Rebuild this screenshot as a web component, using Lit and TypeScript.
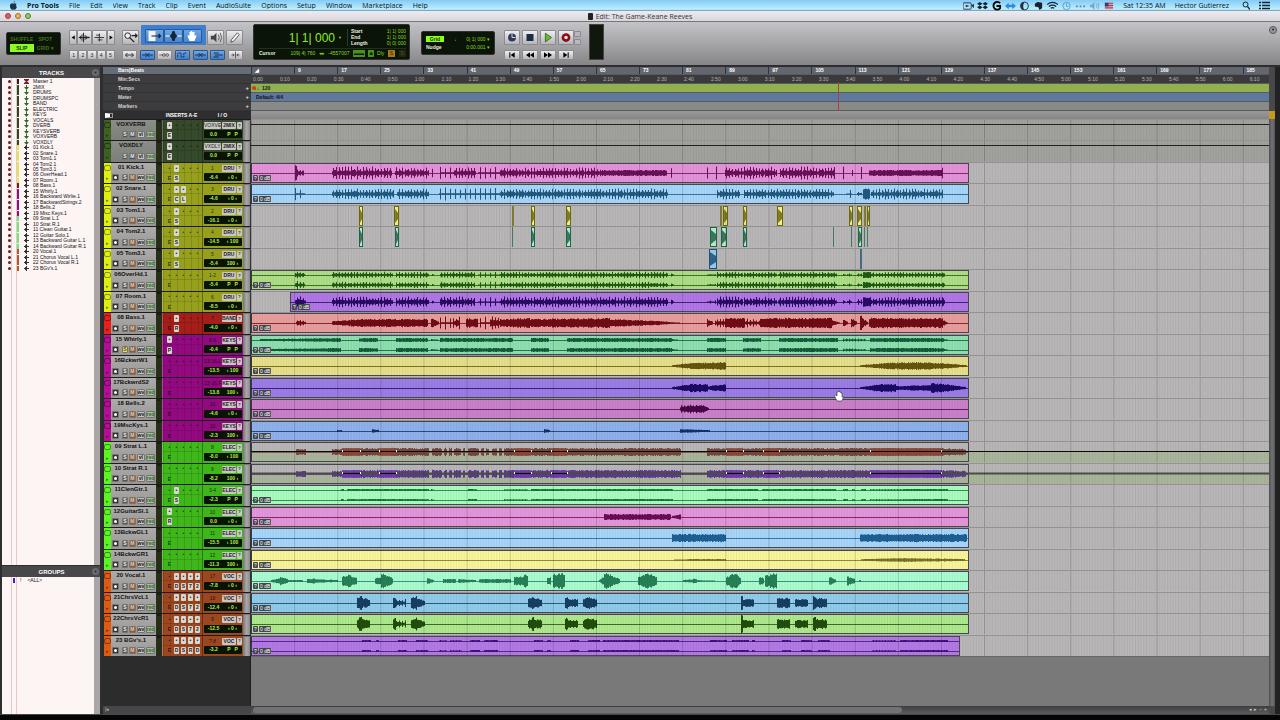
import { LitElement, html, svg, css, nothing } from "lit";
import { customElement } from "lit/decorators.js";
import { classMap } from "lit/directives/class-map.js";

/* Timeline scale: one bar at 120 bpm lasts two seconds. */
const BAR = 5.39;
const SECOND = BAR / 2;
/* Segment positions are counted from the left edge of the window. */
const ORIGIN = 251;

type Kind = 0 | 1 | 2; // solid, dense hits, sparse hits
type Seg = [number, number, number, number, Kind];

interface Track {
  name: string;
  tint: string;
  strip: string;
  input: string;
  out: string;
  vol: string;
  pan: string;
  slots?: string;
  aux?: boolean;
  solo?: boolean;
  volumeView?: boolean;
  from?: number;
  to?: number;
  fill?: string;
  wave?: string;
  stereo?: boolean;
  segs?: Seg[];
  bits?: [number, number][];
  bright?: string;
}

const OLIVE = "#96a01c", LIME = "#dff00a", RED = "#a51f1a", MAG = "#930a80", GRN = "#3fb61a", ORG = "#9c4720", DARK = "#35492b";

const hits = (a: number): Seg[] => [
  [332, 393, a, a, 1], [396, 429, a, a, 1], [432, 434, a / 3, 0, 0], [440, 475, a, a, 1],
  [478, 500, a, a, 2], [500, 668, a, a, 1], [671, 674, a / 2, 0, 0], [707, 716, a / 3, a / 3, 2],
  [717, 743, a, a, 1], [744, 777, a, a, 1], [778, 837, a, a, 1], [843, 846, a / 3, 0, 0],
  [847, 852, a / 2, a / 2, 1], [857, 862, a / 2, a / 2, 1], [863, 871, a, a, 0], [871, 942, a * 0.9, a * 0.9, 1], [942, 945, a, 1, 0],
];
const strat: Seg[] = [
  [296, 306, 3, 3, 0], [332, 342, 3, 3, 0], [342, 360, 4, 4, 0], [360, 379, 4, 4, 0], [379, 396, 4, 4, 0],
  [396, 429, 4, 4, 0], [432, 442, 4, 4, 0], [444, 447, 4, 4, 0], [449, 452, 4, 4, 0], [454, 461, 4, 4, 0],
  [463, 465, 4, 4, 0], [468, 479, 4, 4, 0], [481, 484, 4, 4, 0], [486, 489, 4, 4, 0], [492, 497, 4, 4, 0], [499, 502, 4, 4, 0],
  [504, 514, 4, 4, 0], [514, 531, 4, 4, 0], [531, 551, 4, 4, 0], [551, 567, 4, 4, 0], [567, 681, 4, 4, 0],
  [707, 726, 4, 4, 0], [726, 743, 4, 4, 0], [743, 763, 4, 4, 0], [763, 779, 4, 4, 0], [779, 870, 4, 4, 0],
  [870, 941, 4, 4, 0], [941, 966, 4, 3, 0],
];
const chorus: Seg[] = [
  [357, 362, 5, 9, 0], [362, 370, 5, 4, 0], [393, 396, 6, 6, 0], [396, 406, 4, 4, 1], [411, 417, 5, 7, 0], [417, 425, 5, 2, 0],
  [528, 534, 4, 8, 0], [534, 542, 5, 4, 0], [565, 568, 6, 6, 0], [568, 578, 4, 4, 0], [583, 590, 4, 7, 0], [590, 597, 6, 4, 0],
  [741, 743, 9, 8, 0], [743, 754, 4, 4, 0], [777, 790, 5, 5, 0], [795, 808, 4, 4, 0], [813, 816, 7, 7, 0], [816, 827, 5, 5, 0],
];

const T: Track[] = [
  { name: "VOXVERB", tint: DARK, strip: "#3d6120", input: "VOXVE", out: "2MIX", vol: "0.0", pan: "P P", slots: "E", aux: true },
  { name: "VOXDLY", tint: DARK, strip: "#3d6120", input: "VXDLY", out: "2MIX", vol: "0.0", pan: "P P", slots: "E", aux: true },
  { name: "01 Kick.1", tint: OLIVE, strip: LIME, input: "1", out: "DRU", vol: "-6.4", pan: "› 0 ‹", slots: "-S", fill: "#e694dc", wave: "#6b1058",
    segs: [[295, 297, 8, 8, 0], [297, 304, 4, 4, 1], [332, 392, 6, 6, 1], [395, 429, 6, 5, 1], [432, 433, 5, 5, 0], [440, 454, 6, 7, 2], [454, 476, 5, 5, 1], [478, 500, 6, 6, 2], [500, 602, 5, 5, 1], [602, 667, 3, 3, 0], [671, 672, 6, 6, 0], [707, 708, 6, 6, 0], [716, 717, 7, 7, 0], [725, 743, 6, 6, 1], [743, 777, 6, 6, 1], [780, 835, 6, 6, 1], [843, 844, 6, 6, 0], [852, 853, 4, 4, 0], [861, 862, 7, 7, 0], [869, 942, 3, 3, 0], [942, 943, 6, 6, 0]] },
  { name: "02 Snare.1", tint: OLIVE, strip: LIME, input: "3", out: "DRU", vol: "-4.6", pan: "› 0 ‹", slots: "-CL", fill: "#a8d8fd", wave: "#215a80",
    segs: [[295, 305, 6, 6, 2], [332, 394, 5, 5, 1], [397, 429, 5, 5, 1], [439, 470, 6, 6, 2], [470, 500, 6, 6, 2], [500, 668, 5, 5, 1], [717, 740, 5, 5, 1], [744, 834, 5, 5, 1], [846, 852, 4, 4, 2], [857, 862, 2, 2, 1], [863, 870, 6, 6, 0], [871, 943, 5, 5, 1]] },
  { name: "03 Tom1.1", tint: OLIVE, strip: LIME, input: "2", out: "DRU", vol: "-16.1", pan: "› 0 ‹", slots: "-S", fill: "#f8f488", wave: "#6f6a10",
    bits: [[359, 4], [394, 5], [512, 2], [531, 4], [566, 5], [720, 2], [723, 5], [743, 4], [777, 6], [849, 4], [857, 5], [864, 2], [867, 3]] },
  { name: "04 Tom2.1", tint: OLIVE, strip: LIME, input: "4", out: "DRU", vol: "-14.5", pan: "‹ 100", slots: "-S", fill: "#b8f0cc", wave: "#22664a",
    bits: [[359, 4], [395, 4], [512, 1], [531, 4], [566, 5], [710, 7], [721, 6], [743, 4], [833, 1], [851, 1], [858, 4], [864, 1], [867, 1]] },
  { name: "05 Tom3.1", tint: OLIVE, strip: LIME, input: "5", out: "DRU", vol: "-5.4", pan: "100 ›", slots: "-S", fill: "#9ccdf0", wave: "#1d5478", bits: [[709, 8], [860, 2]] },
  { name: "06OverHd.1", tint: OLIVE, strip: LIME, input: "1-2", out: "DRU", vol: "-5.4", pan: "P P", fill: "#b0e088", wave: "#1f5a14", stereo: true, segs: [[295, 305, 4, 3, 1], ...hits(3)] },
  { name: "07 Room.1", tint: OLIVE, strip: LIME, input: "6", out: "DRU", vol: "-8.5", pan: "› 0 ‹", from: 290, fill: "#b278e8", wave: "#2a0a63", segs: [[295, 306, 6, 5, 1], ...hits(5)] },
  { name: "08 Bass.1", tint: RED, strip: "#e8201c", input: "7", out: "BAND", vol: "-4.0", pan: "› 0 ‹", slots: "-R", fill: "#eb9f9f", wave: "#720c14",
    segs: [[296, 306, 4, 2, 1], [332, 360, 2, 4, 0], [360, 428, 4, 4, 0], [431, 439, 5, 1, 0], [440, 453, 6, 6, 2], [453, 460, 6, 6, 1], [466, 478, 5, 4, 0], [480, 490, 6, 6, 2], [490, 500, 7, 5, 1], [500, 530, 4, 5, 0], [530, 610, 4, 5, 0], [610, 660, 4, 2, 0], [660, 680, 2, 0, 0], [707, 713, 4, 1, 0], [715, 725, 6, 3, 1], [725, 745, 5, 5, 0], [745, 760, 4, 3, 1], [760, 832, 5, 5, 0], [832, 840, 3, 0, 0], [843, 848, 4, 1, 0], [851, 857, 5, 1, 0], [860, 863, 9, 5, 0], [863, 868, 4, 1, 0], [869, 943, 5, 5, 0], [943, 948, 3, 0, 0]] },
  { name: "15 Whirly.1", tint: MAG, strip: "#b80c98", input: "5-6", out: "KEYS", vol: "-0.4", pan: "P P", slots: "P", solo: true, fill: "#8fe2b2", wave: "#145c3a", stereo: true,
    segs: [[260, 341, 1, 2, 0], [359, 378, 2, 2, 0], [396, 428, 2, 2, 0], [431, 438, 1, 0, 0], [440, 513, 2, 2, 0], [531, 549, 2, 2, 0], [567, 672, 2, 2, 0], [672, 678, 1, 0, 0], [707, 726, 2, 2, 0], [743, 761, 2, 2, 0], [779, 838, 2, 2, 0], [843, 866, 2, 1, 1], [870, 944, 2, 2, 0], [944, 948, 1, 0, 0]] },
  { name: "16BckwrW1", tint: MAG, strip: "#b80c98", input: "13-16.L", out: "KEYS", vol: "-13.5", pan: "‹ 100", fill: "#e9e28c", wave: "#665510",
    segs: [[672, 690, 1, 3, 0], [690, 726, 3, 4, 0], [860, 885, 1, 3, 0], [885, 912, 3, 4, 0], [912, 940, 4, 3, 0], [940, 967, 3, 1, 0]] },
  { name: "17BckwrdS2", tint: MAG, strip: "#b80c98", input: "13-16.R", out: "KEYS", vol: "-13.8", pan: "100 ›", fill: "#9e7ee8", wave: "#1c0a66",
    segs: [[672, 690, 1, 4, 0], [690, 708, 4, 4, 0], [708, 726, 2, 4, 0], [860, 880, 1, 4, 0], [880, 896, 4, 4, 0], [896, 931, 2, 3, 0], [931, 945, 5, 4, 0], [945, 966, 4, 1, 0]] },
  { name: "18 Bells.2", tint: MAG, strip: "#b80c98", input: "10", out: "KEYS", vol: "-4.6", pan: "› 0 ‹", fill: "#cc82cc", wave: "#4a0745", segs: [[680, 703, 4, 4, 1], [681, 703, 3, 4, 0], [703, 709, 4, 1, 0]] },
  { name: "19MscKys.1", tint: MAG, strip: "#b80c98", input: "10", out: "KEYS", vol: "-2.3", pan: "100 ›", fill: "#90b3ee", wave: "#14306b", segs: [[337, 342, 1, 1, 0], [372, 379, 2, 1, 0], [544, 550, 2, 1, 0], [680, 710, 2, 1, 0]] },
  { name: "09 Strat L.1", tint: GRN, strip: "#5bf520", input: "8", out: "ELEC", vol: "-8.0", pan: "‹ 100", volumeView: true, fill: "#b4b0ac", wave: "#76483e", bright: "#96483c", segs: strat },
  { name: "10 Strat R.1", tint: GRN, strip: "#5bf520", input: "9", out: "ELEC", vol: "-8.2", pan: "100 ›", volumeView: true, fill: "#b4b0ac", wave: "#5f3a94", bright: "#7a38c4", segs: strat },
  { name: "11ClenGtr.1", tint: GRN, strip: "#5bf520", input: "3-4", out: "ELEC", vol: "-2.3", pan: "P P", slots: "-S", fill: "#abffc0", wave: "#1a7440", stereo: true,
    segs: [[341, 344, 1, 1, 0], [347, 429, 1, 1, 0], [431, 434, 1, 0, 0], [468, 477, 1, 1, 0], [504, 528, 1, 1, 1], [531, 673, 1, 1, 0], [707, 758, 1, 1, 0], [762, 836, 1, 1, 0], [843, 848, 1, 1, 0], [852, 855, 1, 1, 0], [861, 866, 1, 1, 0], [870, 904, 1, 1, 1], [904, 948, 1, 1, 0]] },
  { name: "12GuitarSl.1", tint: GRN, strip: "#5bf520", input: "10", out: "ELEC", vol: "0.0", pan: "› 0 ‹", slots: "R", fill: "#e797dd", wave: "#6b0d55", segs: [[604, 610, 3, 3, 0], [610, 671, 3, 3, 0], [672, 681, 1, 3, 0]] },
  { name: "13BckwGL1", tint: GRN, strip: "#5bf520", input: "11", out: "ELEC", vol: "-15.5", pan: "‹ 100", fill: "#a8d8fd", wave: "#1e6096", segs: [[672, 726, 4, 4, 0], [860, 967, 4, 4, 0]] },
  { name: "14BckwGR1", tint: GRN, strip: "#5bf520", input: "12", out: "ELEC", vol: "-11.3", pan: "100 ›", fill: "#fbf89c", wave: "#77742a", segs: [[674, 690, 0, 1, 0], [690, 726, 1, 1, 0], [861, 905, 1, 2, 0], [905, 965, 2, 1, 0]] },
  { name: "20 Vocal.1", tint: ORG, strip: "#e05a10", input: "17", out: "VOC", vol: "-7.8", pan: "› 0 ‹", slots: "-DS72", fill: "#abffd3", wave: "#268258",
    segs: [[271, 280, 1, 3, 0], [280, 288, 4, 2, 0], [288, 303, 1, 1, 0], [307, 315, 2, 3, 0], [315, 338, 2, 1, 0], [342, 348, 5, 7, 0], [348, 357, 7, 3, 0], [375, 381, 3, 4, 0], [381, 385, 8, 8, 0], [385, 393, 6, 3, 0], [427, 434, 3, 1, 0], [443, 456, 2, 2, 0], [458, 476, 2, 1, 0], [479, 511, 2, 2, 0], [514, 524, 4, 5, 0], [524, 528, 8, 4, 0], [547, 551, 3, 4, 0], [553, 565, 7, 8, 0], [599, 604, 1, 5, 0], [604, 612, 9, 6, 0], [612, 620, 5, 2, 0], [638, 648, 4, 9, 0], [648, 657, 8, 4, 0], [683, 693, 1, 2, 0], [693, 697, 3, 2, 0], [697, 715, 1, 0, 0], [726, 735, 4, 9, 0], [735, 741, 8, 3, 0], [759, 764, 4, 3, 0], [765, 770, 7, 5, 0], [770, 777, 8, 8, 0], [829, 836, 5, 1, 0], [847, 855, 5, 2, 0], [859, 861, 1, 1, 0]] },
  { name: "21ChrsVcL1", tint: ORG, strip: "#e05a10", input: "18", out: "VOC", vol: "-12.4", pan: "› 0 ‹", slots: "-DS72", fill: "#91ceed", wave: "#163f60", segs: chorus },
  { name: "22ChrsVcR1", tint: ORG, strip: "#e05a10", input: "9", out: "VOC", vol: "-12.5", pan: "› 0 ‹", slots: "-DS72", fill: "#afeb8f", wave: "#234d0c", segs: chorus },
  { name: "23 BGv's.1", tint: ORG, strip: "#e05a10", input: "7-8", out: "VOC", vol: "-3.2", pan: "P P", slots: "-DSRD", to: 959, fill: "#b47be6", wave: "#42107e", stereo: true,
    segs: [[362, 371, 1, 1, 0], [376, 379, 1, 1, 0], [398, 407, 1, 1, 0], [416, 428, 1, 1, 0], [439, 447, 1, 1, 2], [450, 462, 1, 1, 1], [470, 480, 1, 1, 0], [484, 498, 1, 1, 0], [534, 543, 1, 1, 0], [547, 551, 1, 1, 0], [570, 579, 1, 1, 0], [588, 600, 1, 1, 0], [603, 679, 1, 1, 0], [710, 727, 1, 1, 0], [732, 749, 1, 1, 0], [752, 755, 1, 1, 0], [782, 791, 1, 1, 0], [801, 812, 1, 1, 0], [818, 830, 1, 1, 0], [872, 896, 1, 1, 1], [900, 948, 1, 1, 0]] },
];

const LIST: [string, string][] = [
  ["Master 1", "#222"], ["2MIX", "#2c4a20"], ["DRUMS", "#2c4a20"], ["DRUMSPC", "#2c4a20"], ["BAND", "#2c4a20"], ["ELECTRIC", "#2c4a20"],
  ["KEYS", "#2c4a20"], ["VOCALS", "#2c4a20"], ["DVERB", "#2c4a20"], ["KEYSVERB", "#2c4a20"], ["VOXVERB", "#2c4a20"], ["VOXDLY", "#2c4a20"],
  ["01 Kick.1", "#e6e44c"], ["02 Snare.1", "#e6e44c"], ["03 Tom1.1", "#e6e44c"], ["04 Tom2.1", "#e6e44c"], ["05 Tom3.1", "#e6e44c"],
  ["06 OverHead.1", "#e6e44c"], ["07 Room.1", "#e6e44c"], ["08 Bass.1", "#6e1c24"], ["15 Whirly.1", "#8a1080"], ["16 Backward Wirlie.1", "#8a1080"],
  ["17 BackwardStrings.2", "#8a1080"], ["18 Bells.2", "#8a1080"], ["19 Misc Keys.1", "#8a1080"], ["09 Strat L.1", "#6ee87a"], ["10 Strat R.1", "#6ee87a"],
  ["11 Clean Guitar.1", "#6ee87a"], ["12 Guitar Solo.1", "#6ee87a"], ["13 Backward Guitar L.1", "#6ee87a"], ["14 Backward Guitar R.1", "#6ee87a"],
  ["20 Vocal.1", "#b8562c"], ["21 Chorus Vocal L.1", "#b8562c"], ["22 Chorus Vocal R.1", "#b8562c"], ["23 BGv's.1", "#b8562c"],
];

function wavePath(segs: Seg[], mid: number, seed: number): string {
  let s = seed * 7919 + 13, d = "";
  const rnd = () => ((s = (s * 16807) % 2147483647) / 2147483647);
  for (const [x0, x1, a0, a1, kind] of segs) {
    const n = Math.max(1, x1 - x0);
    for (let i = 0; i < n; i++) {
      const a = a0 + ((a1 - a0) * i) / n, r = rnd();
      const h = kind === 0 ? a * (0.72 + 0.32 * r)
        : kind === 1 ? a * ((x0 + i) % 3 === 0 ? 0.65 + 0.45 * r : 0.25 + 0.3 * r)
        : a * ((x0 + i) % 5 === 0 ? 0.7 + 0.4 * r : 0.12);
      const hh = Math.max(0.6, h);
      d += `M${x0 + i - ORIGIN} ${(mid - hh).toFixed(1)}h1v${(hh * 2).toFixed(1)}h-1z`;
    }
  }
  return d;
}

const BRIGHT = [[342, 360], [379, 396], [514, 531], [551, 567], [726, 743], [763, 779], [870, 941]];

/* Glyphs of the edit tools, drawn in a 16 by 12 box. */
const glyph: Record<string, unknown> = {
  left: svg`<path d="M12 1v10L4 6z"/>`,
  right: svg`<path d="M4 1v10l8-5z"/>`,
  wave: svg`<path d="M1 6h14M3 4v4M5 2v8M7 0v12M9 3v6M11 4v4M13 5v2" stroke="#222" stroke-width="1.2"/>`,
  midi: svg`<path d="M2 6h12M4 3h5M6 9h6M8 1v10" stroke="#333" stroke-width="1.2" fill="none"/>`,
  zoom: svg`<circle cx="5" cy="4" r="3" fill="#eee" stroke="#222"/><path d="M7 6l5 5M9 4h6M13 2l2 2-2 2" stroke="#222" stroke-width="1.3" fill="none"/>`,
  trim: svg`<path d="M2 1h7v10H2z" fill="#f4f4f4"/><path d="M5 6h9M12 4l2 2-2 2" stroke="#123" stroke-width="1.2" fill="none"/>`,
  select: svg`<path d="M0 6h16" stroke="#fff"/><path d="M4 6l2-2 1-3h2l1 3 2 2-2 2-1 3H7L6 8z" fill="#132638"/>`,
  hand: svg`<path d="M5 11L3 6l1-1 1 1V2h1.300v3V1h1.400v4V2H10v4l1-1 1 1-2 5z" fill="#fff"/>`,
  scrub: svg`<path d="M3 4h3l3-3v10L6 8H3z" fill="#444"/><path d="M11 3q2 3 0 6M13 1q3 5 0 10" stroke="#555" fill="none"/>`,
  pencil: svg`<path d="M4 11l1-3 6-7 2 2-6 7z" fill="#f6f6f6" stroke="#333" stroke-width=".8"/>`,
  arrows: svg`<path d="M2 6h12M5 3L2 6l3 3M11 3l3 3-3 3" stroke="#222" stroke-width="1.3" fill="none"/>`,
  tab: svg`<path d="M0 6h7M9 6h7M5 3l3 3-3 3M11 3L8 6l3 3" stroke="#0c2038" stroke-width="1.300" fill="none"/>`,
  link: svg`<path d="M0 6h6" stroke="#444"/><circle cx="7" cy="6" r="2" fill="none" stroke="#333"/><circle cx="12" cy="6" r="2" fill="none" stroke="#333"/>`,
  keys: svg`<path d="M1 9V3h5v6h4V3h5" stroke="#0c2038" stroke-width="1.300" stroke-dasharray="3 1" fill="none"/>`,
  mirror: svg`<path d="M2 3h8M4 6h12M2 9h8" stroke="#0c2038" stroke-width="1.300"/>`,
  insert: svg`<path d="M8 1v10M2 6h4M10 6h4M4 4l2 2-2 2M12 4l-2 2 2 2" stroke="#222" fill="none"/>`,
  online: svg`<circle cx="8" cy="6" r="4.500" fill="#2d3a55"/><path d="M8 2v4h4" stroke="#eee" fill="none"/>`,
  stop: svg`<path d="M4 2h8v8H4z" fill="#1c2c48"/>`,
  play: svg`<path d="M5 1v10l7-5z" fill="#5fc026" stroke="#234a12" stroke-width=".8"/>`,
  record: svg`<circle cx="8" cy="6" r="5" fill="#8c0c14"/><circle cx="8" cy="6" r="2" fill="#f6eaea"/>`,
  rtz: svg`<path d="M4 2h1.500v8H4zM12 2v8L6 6z"/>`,
  rew: svg`<path d="M8 2v8L2 6zM14 2v8L8 6z"/>`,
  ffw: svg`<path d="M2 2v8l6-4zM8 2v8l6-4z"/>`,
  end: svg`<path d="M4 2v8l6-4zM10.500 2H12v8h-1.500z"/>`,
};
const icon = (n: string) => html`<svg class="glyph" viewBox="0 0 16 12" aria-hidden="true">${glyph[n]}</svg>`;

const STATUS = [
  svg`<rect x="0" y="2" width="9" height="7" rx="1" fill="none" stroke="#234"/><path d="M3 4l4 1.500L3 7zM9 5l3-2v5z" fill="#234"/>`,
  svg`<path d="M3 1l3 2-3 2-3-2zM9 1l3 2-3 2-3-2zM3 5l3 2-3 2-3-2zM9 5l3 2-3 2-3-2z" fill="#123"/>`,
  svg`<path d="M10 2.500A4.200 4.200 0 1 0 10 8V5.500H6" stroke="#000" stroke-width="2" fill="none"/>`,
  svg`<path d="M0 5.500L4 2v7zM12 5.500L8 2v7zM4 4h4v3H4z" fill="#2a8be0"/>`,
  svg`<circle cx="6" cy="5.500" r="4.300" fill="none" stroke="#234"/><path d="M6 1a4.500 4.500 0 0 0 0 9q-3-4 0-9z" fill="#234"/>`,
  svg`<path d="M2 3l3-2 5 1v6l-3 2-1-3-4-1z" fill="#15242c"/>`,
  svg`<path d="M0 4q6-5 12 0M2 6q4-3 8 0M4 8q2-1.500 4 0" stroke="#123" stroke-width="1.300" fill="none"/>`,
  svg`<circle cx="6" cy="5.500" r="4" fill="none" stroke="#5c9cc8"/><path d="M6 3v3h2" stroke="#5c9cc8" fill="none"/>`,
  svg`<path d="M1 5h2v2H1zM5 5h2v2H5zM9 5h2v2H9z" fill="#5d87a8"/>`,
  svg`<path d="M1 4h2l3-3v9L3 7H1z" fill="#79a8c6"/><path d="M8 3q2 2.500 0 5M10 2q2 3.500 0 7" stroke="#79a8c6" fill="none"/>`,
  svg`<path d="M2 2h9v7H2z" fill="#d8a0a8"/><path d="M2 2.500h9M2 5h9M2 7.500h9" stroke="#b0304a"/><path d="M2 2h4v4H2z" fill="#34407c"/>`,
];

@customElement("app-root")
export class AppRoot extends LitElement {
  static styles = css`
    :host { display: block; font-family: "Liberation Sans", Arial, sans-serif; font-size: 5px; line-height: 1; color: #111; }
    * { box-sizing: border-box; }
    button { font: inherit; color: inherit; border: 0; padding: 0; margin: 0; background: none; line-height: 1; white-space: nowrap; overflow: hidden; }
    .window { display: flex; flex-direction: column; height: 100vh; min-height: 640px; background: #0a0a0c; overflow: hidden; }
    .glyph { display: block; width: 100%; height: 100%; }

    .menubar { flex: none; height: 11px; display: flex; align-items: center; padding: 0 10px 0 9px; font-family: "Open Sans", "Noto Sans", sans-serif; font-size: 7px; font-weight: 500; color: #06141f; background: linear-gradient(#84cbf6, #bdeefc 85%, #5c8ca4); }
    .menubar .apple { width: 9px; height: 9px; margin-right: 9px; }
    .menus { display: flex; gap: 10px; }
    .menus button:first-child { font-weight: 700; }
    .status { margin-left: auto; display: flex; align-items: center; gap: 9px; }
    .status-icons { display: flex; gap: 3px; }
    .status-icons svg { width: 11px; height: 10px; }
    .status .find { width: 8px; height: 9px; margin-left: 4px; }
    .status .list { width: 11px; height: 9px; margin: 0; }

    .titlebar { flex: none; height: 11px; display: grid; grid-template-columns: 1fr auto 1fr; align-items: center; font-family: "Open Sans", "Noto Sans", sans-serif; font-size: 7px; color: #333; background: linear-gradient(#eeeaf0, #d9d7dc); border-bottom: 1px solid #77767a; }
    .lights { display: flex; gap: 4px; padding-left: 5px; }
    .lights button { width: 6px; height: 6px; border-radius: 50%; border: 1px solid #8a4a4a; background: #f0565a; }
    .lights button:nth-child(2) { background: #f5b34a; border-color: #9a7030; }
    .lights button:nth-child(3) { background: #8fd05c; border-color: #4e8030; }
    .titlebar h1 { margin: 0; font: inherit; display: flex; gap: 3px; align-items: center; }
    .doc { width: 5px; height: 7px; background: #222; border-radius: 1px; }

    .toolbar { flex: none; height: 43px; display: flex; align-items: flex-end; padding: 0 3px 5px 6px; background: linear-gradient(#c4c3c8, #a9a8ab 45%, #868688); }
    .lcd { background: #0b1408; border: 1px solid #31342f; border-radius: 2px; color: #86dc1c; }
    .modes { width: 55px; height: 23px; margin-bottom: 5px; display: grid; grid-template-columns: 1fr 1fr; align-content: center; padding: 2px 3px; row-gap: 1px; color: #447114; font-size: 5px; }
    .modes button { height: 8px; font-weight: 700; }
    .modes .on { background: #8dff1e; color: #17300a; }
    .group { display: flex; flex-direction: column; gap: 5px; }
    .bar { display: flex; }
    .key { background: linear-gradient(#eeeef0, #b6b6ba); border: 1px solid #8a8a90; border-radius: 1px; height: 15px; width: 17px; color: #222; }
    .key.low { height: 10px; }
    .views { width: 46px; margin-left: 8px; }
    .views .key { flex: 2; width: auto; }
    .views .slim { flex: 1; padding: 3px 0; }
    .views .low { flex: 1; }
    .edit { width: 121px; margin-left: 7px; }
    .edit .bar:first-child { align-items: flex-end; justify-content: space-between; }
    .smart { display: flex; padding: 4px 4px 2px 4px; height: 20px; background: #3f7fd0; border-radius: 1px; }
    .smart .key { width: 19px; height: 14px; background: linear-gradient(#6fa6e4, #4a86ce); border-color: #2b5a9a; }
    .edit .low { width: 15px; }
    .edit .bar:last-child { justify-content: space-between; }
    .key.blue { background: linear-gradient(#6fa8e8, #3f7cc8); border-color: #2a5690; }

    .counter { width: 157px; height: 36px; margin-left: 10px; display: flex; flex-direction: column; padding: 2px 3px 1px 5px; }
    .counter .top { display: flex; flex: 1; align-items: center; }
    .counter output { font-size: 12px; width: 76px; text-align: right; color: #90ec22; }
    .counter .drop { margin: 0 5px 0 3px; font-size: 4px; }
    .counter dl { flex: 1; margin: 0; padding-left: 3px; border-left: 1px solid #294018; display: grid; grid-template-columns: 1fr auto; row-gap: 1px; }
    dt { color: #e8f0e0; font-weight: 700; }
    dd { margin: 0; }
    .counter dt, .counter dd { font-size: 5px; }
    .counter .foot { display: flex; justify-content: space-between; align-items: center; border-top: 1px solid #21301a; height: 10px; }
    .counter .foot b { color: #e8f0e0; width: 28px; }
    .swatch { background: #4b9018; color: #0b1408; padding: 1px; }
    .amber { background: #a8781c; color: #2c1c04; padding: 1px 2px; }
    .dim { background: #24260f; color: #4f5a20; padding: 1px 2px; }
    .gridbox { width: 74px; height: 24px; margin: 0 0 5px 11px; padding: 3px 4px; display: grid; grid-template-columns: auto 1fr; row-gap: 1px; align-items: center; }
    .gridbox .on { background: #8dff1e; color: #17300a; width: 18px; height: 6px; font-weight: 700; }
    .gridbox .lab { color: #e8f0e0; font-weight: 700; text-align: left; }
    .gridbox span { text-align: right; }
    .transport { width: 72px; margin-left: 9px; }
    .transport .bar { gap: 2px; }
    .transport .key { width: 16px; }
    .mini { display: flex; flex-direction: column; gap: 2px; margin: 0 8px 15px -2px; }
    .mini .key { width: 7px; height: 6px; background: #b9b9bd; }
    .master { width: 15px; height: 36px; background: #10180e; border: 1px solid #444; }
    .more { margin-left: auto; margin-bottom: 26px; width: 8px; height: 8px; border-radius: 50%; border: 1px solid #555; background: #999; font-size: 4px; }

    .body { flex: 1; min-height: 0; display: flex; gap: 2px; padding-top: 2px; background: #2e2e30; }
    aside { flex: none; width: 101px; padding: 0 1px 0 2px; display: flex; flex-direction: column; }
    .side-head { flex: none; height: 11px; display: flex; align-items: center; color: #fff; font-weight: 700; font-size: 6px; background: #48484a; }
    .side-head h2 { margin: 0; font: inherit; flex: 1; text-align: center; padding-left: 9px; }
    .side-head button { width: 7px; height: 7px; border-radius: 50%; background: #6b6b6e; color: #222; font-size: 4px; margin-right: 1px; }
    .panel { border-right: 6px solid #aaa6a8; background: linear-gradient(#e8c8cc, #e8c8cc) 9px 0 / 1px 100% no-repeat, linear-gradient(#e8c8cc, #e8c8cc) 14px 0 / 1px 100% no-repeat, #fdf4f4; }
    .tracks-panel { flex: 1; padding-top: 1px; }
    .tracks-panel ul { margin: 0; padding: 0; list-style: none; display: grid; grid-template-rows: repeat(35, 1fr); height: 192px; }
    .tracks-panel li { display: grid; grid-template-columns: 3px 5px 8px 1fr; column-gap: 3px; align-items: center; padding-left: 6px; white-space: nowrap; min-height: 0; }
    .dot { width: 3px; height: 3px; border-radius: 50%; background: #6a1c24; }
    .chip { width: 2px; height: 5px; margin-left: 3px; }
    .kind { width: 5px; height: 5px; margin-left: 2px; }
    .groups-head { margin-top: 1px; }
    .groups-panel { flex: none; height: 137px; padding: 1px 0 0 11px; display: flex; gap: 5px; align-items: flex-start; }
    .groups-panel i { width: 2px; height: 5px; background: #4a1cd0; }
    .groups-panel button { margin-left: 1px; }

    main { flex: 1; min-width: 0; display: flex; flex-direction: column; background: #2b2b2b; position: relative; }
    .line { display: grid; grid-template-columns: 148px 1fr 11px; min-height: 0; }
    .rulers .line { height: 9px; }
    .rulers .line:first-child { height: 8px; }
    .rulers .label { display: flex; align-items: center; color: #d2d2d2; font-weight: 700; background: #3c3c3e; padding-left: 15px; justify-content: space-between; padding-right: 2px; border-bottom: 1px solid #333335; }
    .rulers .line:first-child .label { background: #676d78; color: #fff; }
    .rulers .label button { font-size: 6px; color: #ddd; }
    .rule { display: flex; overflow: hidden; align-items: center; white-space: nowrap; border-bottom: 1px solid #5a5a5a; }
    .rule span { flex: none; }
    .bars { background: #62666e; color: #fff; font-weight: 700; }
    .bars span { border-left: 1px solid #30333a; padding: 1px 0 1px 3px; height: 100%; }
    .secs { background: #3a3a3c; color: #b4b4b4; }
    .secs span { padding-left: 2px; }
    .tempo { background: #91b04f; padding-left: 4px; }
    .tempo i { width: 4px; height: 4px; background: #c8401c; border-radius: 2px 2px 0 2px; margin: 0 1px 0 -3px; }
    .meter { background: #5f78a0; padding-left: 5px; font-weight: 700; }
    .markers { background: #888a88; }
    .edge { background: #48484a; border-right: 5px solid #222; }
    .heads { flex: none; height: 8px; }
    .heads .label { display: grid; grid-template-columns: 58px 41px 1fr; color: #fff; font-weight: 700; align-items: center; text-align: center; background: #2e2e30; }
    .heads .label span:last-child { padding-right: 8px; }
    .heads .space { background: linear-gradient(#999, #858585); }
    .heads .corner { background: #c89a1c; border-right: 5px solid #222; }
    .viewicon { width: 8px; height: 5px; border: 1px solid #999; border-left: 5px solid #fff; margin-left: 2px; }

    .rack { flex: 1; min-height: 0; display: grid; grid-template-rows: repeat(25, minmax(0, 1fr)); }
    .rack .line { overflow: hidden; }
    .strip { display: grid; grid-template-columns: 7px 45px 6px 40px 41px 1fr; margin-left: 1px; border-top: 1px solid #1c1c1c; min-height: 0; }
    .tab { display: flex; flex-direction: column; justify-content: space-between; align-items: center; padding: 2px 0; }
    .tab::before { content: ""; width: 5px; height: 4px; border: 1px solid rgba(0, 0, 0, 0.4); border-radius: 2px; }
    .tab::after { content: "▸"; font-size: 5px; opacity: 0.6; }
    .name { background: linear-gradient(#aeacaa, #989694); display: flex; flex-direction: column; justify-content: space-between; padding: 1px 1px 2px; min-height: 0; }
    .name .title { font-size: 6px; font-weight: 700; text-align: center; height: 7px; padding-right: 5px; }
    .aux .name { background: linear-gradient(#8b8d88, #7c7e78); }
    .name .row { display: flex; gap: 1px; }
    .sq { height: 7px; width: 7px; border-radius: 1px; background: #c4c2c0; border: 1px solid #77736f; font-weight: 700; font-size: 5px; line-height: 5px; text-align: center; }
    .rec { color: #161616; background: #333; margin-right: 2px; padding: 1px; }
    .rec::before { content: ""; display: block; width: 3px; height: 3px; border-radius: 50%; background: #fff; }
    .aux .rec { visibility: hidden; }
    .solo { background: #55565a; color: #eee; }
    .solo.lit { background: #f0e04c; color: #554; }
    .mute { background: #8a5a3c; color: #e8c8a8; }
    .aux .mute { background: #46506a; color: #eee; }
    .wv { width: 9px; }
    .auto { width: 10px; background: #a4bca0; color: #2c6a2c; }
    .vu { background: #24300f; margin: 0 1px; border-top: 2px solid #17200c; }
    .inserts { display: grid; grid-template-columns: repeat(5, 7px); grid-template-rows: 1fr 1fr; padding: 0 0 0 3px; align-items: center; justify-items: center; border-left: 1px solid rgba(255, 255, 255, 0.25); background-image: linear-gradient(transparent 9px, rgba(0, 0, 0, 0.12) 9px 10px, transparent 10px), repeating-linear-gradient(90deg, rgba(0, 0, 0, 0.12) 0 1px, transparent 1px 7px); }
    .ins { width: 5px; height: 7px; font-size: 5px; font-weight: 700; color: rgba(0, 0, 0, 0.65); }
    .ins.on { background: #d8d6d0; border-radius: 1px; color: #222; }
    .io { display: flex; flex-direction: column; justify-content: space-between; padding: 2px 1px; border-left: 1px solid rgba(0, 0, 0, 0.35); }
    .io .row { display: flex; gap: 1px; }
    .io .in { flex: 1; height: 7px; color: rgba(0, 0, 0, 0.75); font-size: 5px; }
    .aux .io .in, .out { background: #c9c7c5; color: #222; border-radius: 1px; }
    .out { width: 14px; height: 7px; font-weight: 700; font-size: 5px; }
    .out.q { width: 5px; font-size: 4px; }
    .readout { display: grid; grid-template-columns: 1fr 1fr; height: 8px; align-items: center; text-align: center; background: #0a1405; color: #b4f04c; border-radius: 1px; font-weight: 700; white-space: pre; }
    .gutter { background: linear-gradient(90deg, #777, #a8a8a8 50%, #8a8a8a); border-right: 1px solid #333; border-top: 1px solid #777; }
    .lane { background: #bab8b8; border-top: 1px solid #949292; overflow: hidden; min-height: 0; }
    .lane.aux-lane { background: #a3a49f; }
    .lane svg { display: block; width: 100%; height: 100%; }
    .lane text { font-size: 5px; fill: #fff; }
    .patterns { position: absolute; width: 0; height: 0; }
    .vscroll { background: linear-gradient(90deg, #4c4c4e, #747476 3px, #58585a 6px, #222 6px); }

    .rest { flex: none; height: 50px; }
    .rest .left { background: #2c2c2c; border-right: 1px solid #1c1c1c; }
    .rest .empty { background: #797979; border-top: 1px solid #666; }
    .hscroll { flex: none; height: 8px; }
    .hscroll .left { background: #464648; color: #bbb; padding: 1px 2px; }
    .hscroll .track { background: linear-gradient(#3e3e40, #5c5c5e); display: flex; justify-content: flex-end; gap: 2px; color: #ccc; padding: 1px 2px; }
    .hscroll .thumb { width: 64%; margin-right: auto; background: #727274; border-radius: 3px; }
    .foot-edge { flex: none; height: 6px; background: #050506; border-top: 1px solid #48484a; }
    .playhead { position: absolute; left: 735px; top: 15px; width: 1px; height: 29px; background: #a04448; }
    .pointer { position: absolute; left: 731px; top: 323px; width: 10px; height: 12px; }
  `;

  private key(name: string, label: string, cls = "") {
    return html`<button class="key ${cls}" aria-label=${label}>${icon(name)}</button>`;
  }

  private toolbar() {
    return html`<section class="toolbar" aria-label="Edit tools">
      <div class="lcd modes"><button>SHUFFLE</button><button>SPOT</button><button class="on">SLIP</button><button>GRID ▾</button></div>
      <div class="group views">
        <div class="bar">${this.key("left", "Zoom out", "slim")}${this.key("wave", "Audio zoom")}${this.key("midi", "MIDI zoom")}${this.key("right", "Zoom in", "slim")}</div>
        <div class="bar">${[1, 2, 3, 4, 5].map((n) => html`<button class="key low">${n}</button>`)}</div>
      </div>
      <div class="group edit">
        <div class="bar">${this.key("zoom", "Zoomer")}
          <div class="smart">${this.key("trim", "Trim")}${this.key("select", "Selector")}${this.key("hand", "Grabber")}</div>
          ${this.key("scrub", "Scrubber")}${this.key("pencil", "Pencil")}</div>
        <div class="bar">${this.key("arrows", "Zoom toggle", "low")}${this.key("tab", "Tab to transients", "low blue")}${this.key("link", "Mirrored editing", "low")}${this.key("keys", "Automation follows edit", "low blue")}${this.key("tab", "Link timeline", "low blue")}${this.key("mirror", "Link track", "low blue")}${this.key("insert", "Insertion follows playback", "low")}</div>
      </div>
      <div class="lcd counter">
        <div class="top"><output>1| 1| 000</output><span class="drop">▼</span>
          <dl><dt>Start</dt><dd>1| 1| 000</dd><dt>End</dt><dd>1| 1| 000</dd><dt>Length</dt><dd>0| 0| 000</dd></dl></div>
        <div class="foot"><b>Cursor</b><span>109| 4| 760</span><span>◂▸</span><span>-4557007</span><span class="swatch">▬▬</span><span class="swatch">■</span><span>Dly</span><span class="amber">S</span><span class="dim">S</span></div>
      </div>
      <div class="lcd gridbox"><button class="on">Grid</button><span>♩ &nbsp; &nbsp; 0| 1| 000 ▾</span><button class="lab">Nudge</button><span>0:00.001 ▾</span></div>
      <div class="group transport">
        <div class="bar">${this.key("online", "Online")}${this.key("stop", "Stop")}${this.key("play", "Play")}${this.key("record", "Record")}</div>
        <div class="bar">${this.key("rtz", "Return to zero", "low")}${this.key("rew", "Rewind", "low")}${this.key("ffw", "Fast forward", "low")}${this.key("end", "Go to end", "low")}</div>
      </div>
      <div class="mini"><button class="key" aria-label="Count off"></button><button class="key" aria-label="Metronome"></button></div>
      <div class="master" role="meter" aria-label="Master level"></div>
      <button class="more" aria-label="Toolbar menu">▼</button>
    </section>`;
  }

  private rulers() {
    const bars = Array.from({ length: 24 }, (_, i) => 1 + i * 8);
    const secs = Array.from({ length: 38 }, (_, i) => i * 10);
    const row = (label: string, plus: boolean, content: unknown) => html`<div class="line"><div class="label"><span>${label}</span>${plus ? html`<button aria-label="Add to ${label}">+</button>` : nothing}</div>${content}<div class="edge"></div></div>`;
    return html`<div class="rulers">
      ${row("Bars|Beats", false, html`<div class="rule bars">${bars.map((b) => html`<span style="width:${BAR * 8}px">${b === 1 ? "◢" : b}</span>`)}</div>`)}
      ${row("Min:Secs", false, html`<div class="rule secs">${secs.map((s) => html`<span style="width:${SECOND * 10}px">${Math.floor(s / 60)}:${String(s % 60).padStart(2, "0")}</span>`)}</div>`)}
      ${row("Tempo", true, html`<div class="rule tempo"><i></i><span><b>♩120</b></span></div>`)}
      ${row("Meter", true, html`<div class="rule meter"><span>Default: 4/4</span></div>`)}
      ${row("Markers", true, html`<div class="rule markers"></div>`)}
    </div>`;
  }

  private lane(t: Track, i: number) {
    const x0 = (t.from ?? 251) - ORIGIN, x1 = (t.to ?? 968) - ORIGIN, w = x1 - x0;
    const mids = t.stereo ? [5, 15] : [10];
    const waves = (segs: Seg[], color: string) => mids.map((m) => svg`<path d=${wavePath(segs, m, i + m)} fill=${color}/>`);
    return svg`
      ${t.aux ? svg`<path d="M0 4.500H2000" stroke="#222"/>` : nothing}
      ${t.volumeView ? svg`<rect y="9" width="2000" height="12" fill="#abb79d"/>` : nothing}
      ${t.segs ? svg`
        <rect x=${x0 + 0.5} y="0.500" width=${w} height="19" fill=${t.volumeView ? "none" : t.fill} stroke="#4a4850"/>
        ${mids.map((m) => svg`<path d="M${x0} ${m + 0.5}H${x1}" stroke=${t.wave} stroke-width=".8"/>`)}
        ${waves(t.segs, t.wave!)}` : nothing}
      ${t.bits ? t.bits.map(([x, bw]) => bw < 3
        ? svg`<rect x=${x - ORIGIN} y="0" width=${bw} height="20" fill=${t.wave} opacity=".75"/>`
        : svg`<rect x=${x - ORIGIN + 0.5} y=".5" width=${bw - 1} height="19" fill=${t.fill} stroke=${t.wave}/><path d="M${x - ORIGIN + 1} 3v14l${bw - 2} -4v-6z" fill=${t.wave} opacity=".85"/>`) : nothing}
      ${t.volumeView ? svg`
        ${BRIGHT.map(([a, b]) => svg`<rect x=${a - ORIGIN} y="6" width=${b - a} height="8" fill=${t.bright} opacity=".75"/>`)}
        <path d="M0 9.500H2000" stroke=${i === 15 ? "#0a0a0a" : "#4c4f46"} stroke-width=${i === 15 ? 1 : 2}/>
        ${BRIGHT.map(([a, b]) => svg`<path d="M${a - ORIGIN} 9.500H${b - ORIGIN}" stroke="#0a0a0a"/><rect x=${a - ORIGIN} y="8" width="1" height="2" fill="#fff"/><rect x=${b - ORIGIN} y="8" width="1" height="2" fill="#fff"/>`)}` : nothing}
      <rect width="100%" height="100%" fill="url(#beats)"/>
      ${t.segs && !t.volumeView ? svg`<rect x=${x0 + 2} y="12" width="5" height="6" rx="1" fill="#44474c"/><rect x=${x0 + 8} y="12" width="12" height="6" rx="1" fill="#44474c"/><text x=${x0 + 3} y="17">?</text><text x=${x0 + 9} y="17">0 dB</text>` : nothing}`;
  }

  private track(t: Track, i: number) {
    const slots = (t.slots ?? "").padEnd(5, " ").split("");
    return html`<div class="line">
      <div class="strip ${t.aux ? "aux" : ""}">
        <div class="tab" style="background:${t.strip}"></div>
        <div class="name">
          <div class="title">${t.name}</div>
          <div class="row"><button class="sq rec" aria-label="Record enable"></button><button class=${classMap({ sq: true, solo: true, lit: !!t.solo })}>S</button><button class="sq mute">M</button><button class="sq wv">${t.aux || t.volumeView ? "vl" : "wv"}</button><button class="sq auto">red</button></div>
        </div>
        <div class="vu"></div>
        <div class="inserts" style="background-color:${t.tint}">
          ${slots.map((s) => html`<button class="ins ${s !== " " && s !== "-" ? "on" : ""}" aria-label="Insert">•</button>`)}
          ${slots.map((s, n) => html`<button class="ins ${s !== " " && s !== "-" ? "on" : ""}">${s === "-" || (n === 0 && s === " ") ? "E" : s}</button>`)}
        </div>
        <div class="io" style="background-color:${t.tint}">
          <div class="row"><button class="in">${t.input}</button><button class="out">${t.out}</button><button class="out q">?</button></div>
          <div class="readout"><span>${t.vol}</span><span>${t.pan === "P P" ? "P   P" : t.pan}</span></div>
        </div>
        <div class="gutter"></div>
      </div>
      <div class="lane ${t.aux ? "aux-lane" : ""}"><svg aria-hidden="true">${this.lane(t, i)}</svg></div>
      <div class="vscroll"></div>
    </div>`;
  }

  render() {
    return html`<div class="window">
      <header class="menubar">
        <svg class="apple" viewBox="0 0 12 12"><path d="M8 0q0 2-2 2.500Q6 .5 8 0zM6 3.500q2-1 4 .5-2 2 .5 4Q9 12 7.500 11.500q-1.500-.6-3 0Q3 12 1.500 8.500.5 3.500 4 3z" fill="#1c3448"/></svg>
        <nav class="menus">${["Pro Tools", "File", "Edit", "View", "Track", "Clip", "Event", "AudioSuite", "Options", "Setup", "Window", "Marketplace", "Help"].map((m) => html`<button>${m}</button>`)}</nav>
        <div class="status">
          <div class="status-icons">${STATUS.map((g) => html`<svg viewBox="0 0 12 11">${g}</svg>`)}</div>
          <span>Sat 12:35 AM</span><span>Hector Gutierrez</span>
          <svg class="find" viewBox="0 0 8 9"><circle cx="3.500" cy="3.500" r="2.500" fill="none" stroke="#123"/><path d="M5.500 5.500L8 8.500" stroke="#123" stroke-width="1.300"/></svg>
          <svg class="list" viewBox="0 0 11 9"><path d="M0 1.500h2M3 1.500h8M0 4.500h2M3 4.500h8M0 7.500h2M3 7.500h8" stroke="#123" stroke-width="1.500"/></svg>
        </div>
      </header>
      <div class="titlebar">
        <div class="lights"><button aria-label="Close"></button><button aria-label="Minimize"></button><button aria-label="Zoom"></button></div>
        <h1><span class="doc"></span>Edit: The Game-Keane Reeves</h1><span></span>
      </div>
      ${this.toolbar()}
      <div class="body">
        <aside>
          <div class="side-head"><h2>TRACKS</h2><button aria-label="Tracks menu">▼</button></div>
          <div class="panel tracks-panel"><ul>${LIST.map(([n, c], i) => html`<li><span class="dot"></span><span class="chip" style="background:${c}"></span><svg class="kind" viewBox="0 0 5 5"><path d=${i === 0 ? "M0 0h5v1L3 2.500 5 4v1H0V4l2-1.500L0 1z" : i < 12 ? "M2 0h1v2h2L2.500 5 0 2h2z" : "M0 2h5v1H0zM1 1h1v3H1zM2 0h1v5H2z"} fill=${i === 0 ? "#7a1c24" : i < 12 ? "#2e6a2a" : "#333"}/></svg><span>${n}</span></li>`)}</ul></div>
          <div class="side-head groups-head"><h2>GROUPS</h2><button aria-label="Groups menu">▼</button></div>
          <div class="panel groups-panel"><i></i><span>!</span><button>&lt;ALL&gt;</button></div>
        </aside>
        <main>
          ${this.rulers()}
          <div class="line heads"><div class="label"><div class="viewicon"></div><span>INSERTS A-E</span><span>I / O</span></div><div class="space"></div><div class="corner"></div></div>
          <svg class="patterns"><defs>
            <pattern id="beats" width=${BAR * 8} height="30" patternUnits="userSpaceOnUse">
              <path d=${Array.from({ length: 15 }, (_, n) => `M${((n + 1) * BAR / 2 + 0.5).toFixed(2)} 0v30`).join("")} stroke="#000" stroke-opacity=".09" stroke-width=".9"/>
              <path d="M.5 0v30" stroke="#000" stroke-opacity=".22"/>
            </pattern></defs></svg>
          <div class="rack">${T.map((t, i) => this.track(t, i))}</div>
          <div class="line rest"><div class="left"></div><div class="empty"></div><div class="vscroll"></div></div>
          <div class="line hscroll"><div class="left">|◂</div><div class="track"><div class="thumb"></div><span>◂</span><span>▸</span><span>−</span><span>+</span></div><div class="edge"></div></div>
          <div class="playhead"></div>
          <svg class="pointer" viewBox="0 0 10 12"><path d="M3 11L0.500 6l1-1L3 6V2h1.200V1h1.300v1h1.300v1H8v4l1.500 0-1.500 4z" fill="#fff" stroke="#333" stroke-width=".6"/></svg>
        </main>
      </div>
      <div class="foot-edge"></div>
    </div>`;
  }
}
